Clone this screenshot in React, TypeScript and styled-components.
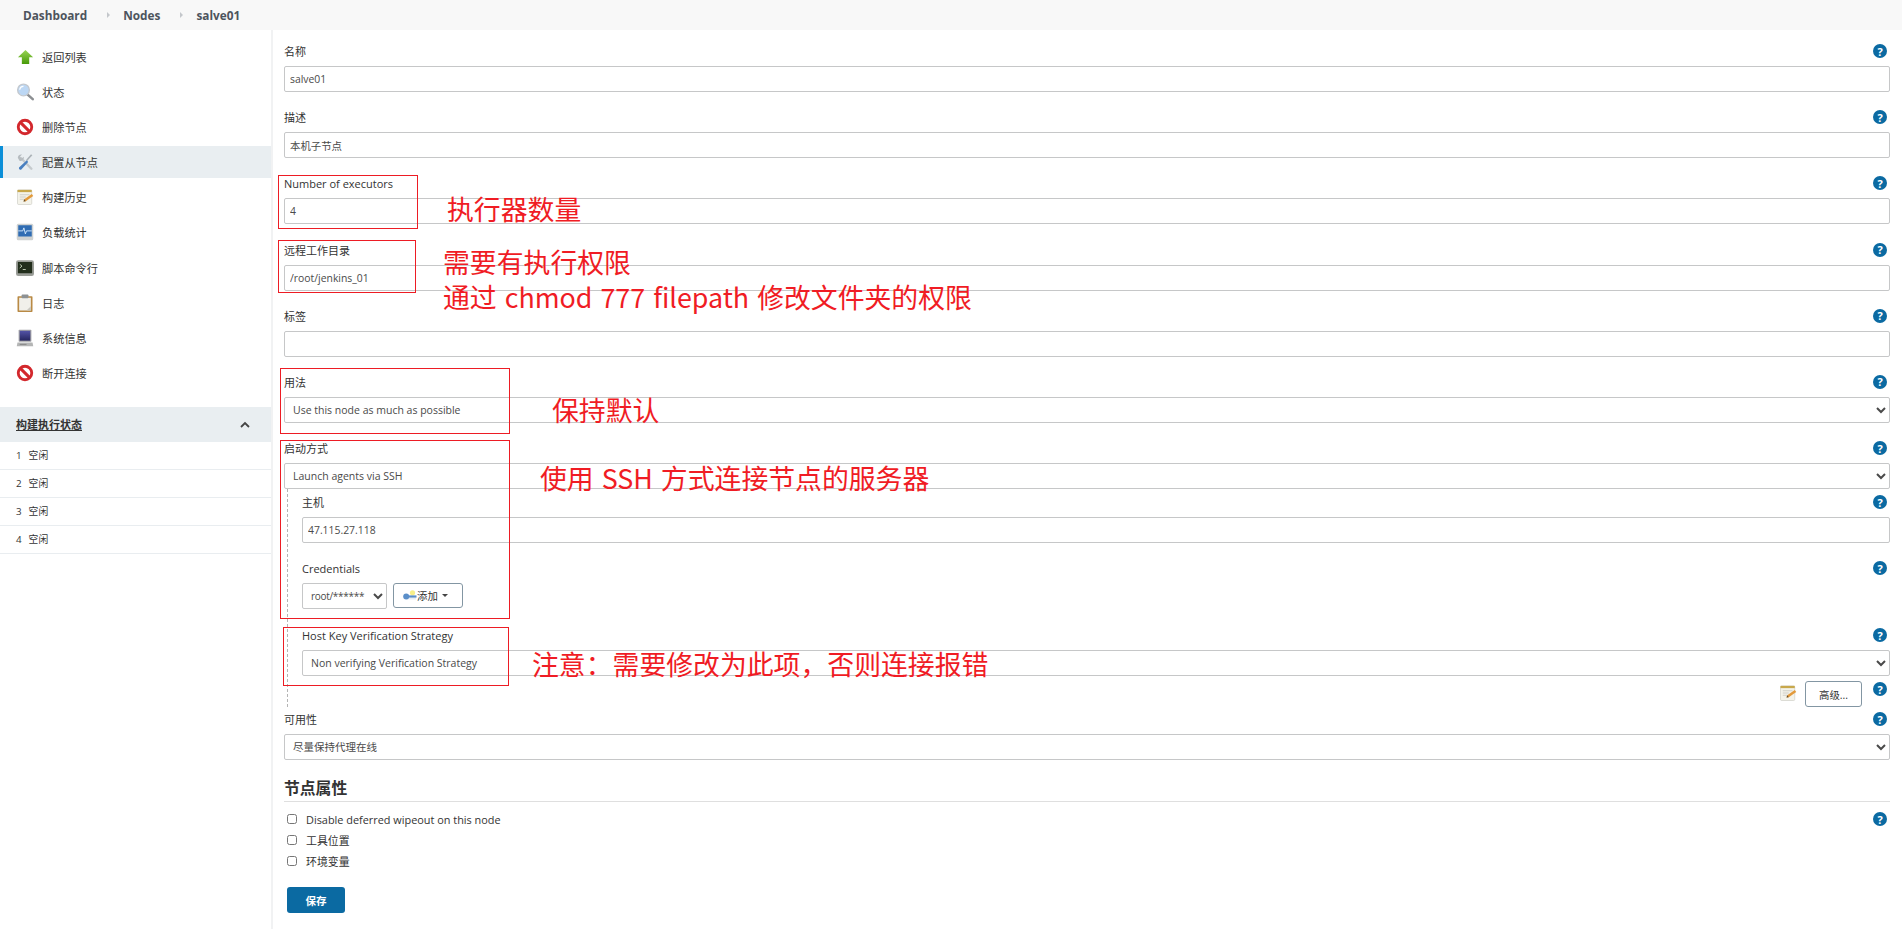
import { FC, ReactNode } from 'react'
import styled, { createGlobalStyle } from 'styled-components'

const FONT = `"Open Sans", "Noto Sans CJK SC", sans-serif`

const GlobalStyle = createGlobalStyle`
  html, body {
    margin: 0;
    padding: 0;
    height: 100%;
    overflow: hidden;
    background: #fff;
    color: #333;
    font-family: ${FONT};
    font-size: 11px;
  }
`

const Page = styled.div`
  position: relative;
  display: flex;
  flex-direction: column;
  height: 929px;
`

const Breadcrumbs = styled.nav`
  display: flex;
  align-items: center;
  flex: 0 0 30px;
  padding-left: 23px;
  background: #f8f8f8;
  font-size: 11.8px;
  font-weight: 700;
  color: #4d545d;
`

const Crumb = styled.span`
  white-space: nowrap;
`

const CrumbSep = styled.i`
  display: block;
  width: 0;
  height: 0;
  margin: 0 13px 0 20px;
  border-left: 3px solid #c4c7cb;
  border-top: 3px solid transparent;
  border-bottom: 3px solid transparent;
`

const Body = styled.div`
  display: flex;
  flex: 1;
  min-height: 0;
`

const Sidebar = styled.aside`
  flex: 0 0 271px;
  padding-top: 11px;
  border-right: 2px solid #f1f2f3;
`

const TaskList = styled.ul`
  display: flex;
  flex-direction: column;
  gap: 3.1px;
  margin: 0 0 18px;
  padding: 0;
  list-style: none;
`

const Task = styled.li<{ $active?: boolean }>`
  display: flex;
  align-items: center;
  gap: 8px;
  height: 32px;
  padding-left: 16px;
  box-sizing: border-box;
  font-size: 11.2px;
  color: #333;
  background: ${p => (p.$active ? '#e9eef1' : 'transparent')};
  box-shadow: ${p => (p.$active ? 'inset 3px 0 0 #0b8fd8' : 'none')};
`

const TaskIcon = styled.svg`
  flex: 0 0 18px;
  width: 18px;
  height: 18px;
`

const ExecutorHead = styled.div`
  display: flex;
  align-items: center;
  justify-content: space-between;
  height: 35px;
  padding: 0 21px 0 16px;
  background: #e9eef1;
`

const ExecutorTitle = styled.span`
  font-size: 11px;
  font-weight: 700;
  text-decoration: underline;
  color: #333;
`

const ExecutorRow = styled.div`
  display: flex;
  align-items: center;
  gap: 7px;
  height: 28px;
  box-sizing: border-box;
  padding-left: 16px;
  border-bottom: 1px solid #e9edf0;
  font-size: 9.8px;
  color: #333;
`

const Main = styled.main`
  flex: 1;
  min-width: 0;
  padding: 11px 12px 0 11px;
`

const Field = styled.div<{ $gap?: number }>`
  margin-bottom: ${p => p.$gap ?? 15.2}px;
`

const LabelRow = styled.div`
  display: flex;
  align-items: center;
  justify-content: space-between;
  height: 20px;
  margin-bottom: 5px;
  padding-right: 3px;
`

const Label = styled.label`
  font-size: 11px;
  color: #333;
`

const HelpBadge = styled.span`
  display: flex;
  align-items: center;
  justify-content: center;
  width: 14px;
  height: 14px;
  border-radius: 50%;
  background: #0b6aa2;
  color: #fff;
  font-size: 11px;
  font-weight: 700;
  line-height: 1;
`

const TextInput = styled.input`
  display: block;
  width: 100%;
  height: 26px;
  box-sizing: border-box;
  padding: 0 5px;
  border: 1px solid #c6c7c8;
  border-radius: 2px;
  background: #fff;
  font: 10.4px ${FONT};
  color: #4a4a4a;
  outline: none;
`

const Select = styled.select<{ $narrow?: boolean }>`
  display: block;
  width: ${p => (p.$narrow ? '85px' : '100%')};
  height: 26px;
  box-sizing: border-box;
  padding: 0 ${p => (p.$narrow ? 0 : 4)}px 0 4px;
  border: 1px solid #c6c7c8;
  border-radius: 2px;
  background: #fff;
  font: ${p => (p.$narrow ? 10 : 10.5)}px ${FONT};
  letter-spacing: ${p => (p.$narrow ? '-0.3px' : 'normal')};
  color: #4a4a4a;
  outline: none;
`

const Nested = styled.div`
  margin: 0 0 2px 3px;
  padding: 3px 0 0 14px;
  border-left: 1px dashed #b4b4b4;
`

const CredentialRow = styled.div`
  display: flex;
  align-items: flex-start;
  gap: 6px;
`

const OutlineButton = styled.button`
  display: inline-flex;
  align-items: center;
  box-sizing: border-box;
  padding: 0;
  border: 1px solid #8396a3;
  border-radius: 3px;
  background: #fff;
  font: 10.4px ${FONT};
  color: #333;
`

const AddButton = styled(OutlineButton)`
  width: 70px;
  height: 25px;
  padding-left: 9px;
`

const AdvancedButton = styled(OutlineButton)`
  justify-content: center;
  width: 57px;
  height: 26px;
`

const Caret = styled.i`
  display: block;
  width: 0;
  height: 0;
  margin-left: 4px;
  border-top: 3px solid #444;
  border-left: 3px solid transparent;
  border-right: 3px solid transparent;
`

const AdvancedRow = styled.div`
  display: flex;
  align-items: flex-start;
  justify-content: flex-end;
  height: 26px;
  padding-right: 3px;
`

const AdvancedIcon = styled.svg`
  width: 18px;
  height: 18px;
  margin: 3px 8px 0 0;
`

const AdvancedHelp = styled.div`
  margin: 1px 0 0 11px;
`

const SectionTitle = styled.h3`
  height: 24px;
  margin: 17px 0 6.5px;
  border-bottom: 1px solid #dfdfdf;
  font-size: 15.8px;
  font-weight: 700;
  line-height: 22px;
  color: #333;
`

const CheckRow = styled.div`
  display: flex;
  align-items: center;
  gap: 9px;
  height: 21px;
  padding: 0 3px;
  font-size: 10.9px;
  color: #333;
`

const CheckBox = styled.input`
  width: 10px;
  height: 10px;
  margin: 0;
  flex: none;
`

const CheckLabel = styled.span`
  flex: 1;
`

const SaveButton = styled.button`
  display: block;
  width: 58px;
  height: 26px;
  margin: 15.5px 0 0 3px;
  border: 0;
  border-radius: 3px;
  background: #0b6aa2;
  color: #fff;
  font: 700 10.5px ${FONT};
`

// hand-drawn notes laid over the screenshot
const NoteBox = styled.div<{ $x: number; $y: number; $w: number; $h: number }>`
  position: absolute;
  left: ${p => p.$x}px;
  top: ${p => p.$y}px;
  width: ${p => p.$w}px;
  height: ${p => p.$h}px;
  box-sizing: border-box;
  border: 1px solid #ed1c24;
  pointer-events: none;
`

const NoteText = styled.div<{ $x: number; $y: number }>`
  position: absolute;
  left: ${p => p.$x}px;
  top: ${p => p.$y}px;
  font-family: "Noto Sans CJK SC", sans-serif;
  font-size: 26.85px;
  line-height: 1;
  word-spacing: 2px;
  white-space: nowrap;
  color: #f01c24;
  pointer-events: none;
`

const ArrowUpIcon = () => (
  <TaskIcon viewBox="0 0 24 24">
    <defs>
      <linearGradient id="gUp" x1="0" y1="0" x2="0" y2="1">
        <stop offset="0" stopColor="#9ad455" />
        <stop offset="1" stopColor="#479a08" />
      </linearGradient>
    </defs>
    <path d="M12.6 2.6 22.8 12.2h-5.2v9.2H7.8v-9.2H2.6z" fill="url(#gUp)" />
  </TaskIcon>
)

const SearchIcon = () => (
  <TaskIcon viewBox="0 0 24 24">
    <path d="M15.5 15.5l6.8 6" stroke="#8c8f92" strokeWidth="3.4" strokeLinecap="round" />
    <circle cx="10" cy="9.3" r="7.8" fill="#bcd7f4" stroke="#c3c8ce" strokeWidth="1.8" />
    <path d="M5 9a5 5 0 0 1 5-4.6" fill="none" stroke="#fff" strokeWidth="1.6" />
  </TaskIcon>
)

const StopIcon = () => (
  <TaskIcon viewBox="0 0 24 24">
    <circle cx="12" cy="12" r="9" fill="#fff" stroke="#d3282d" strokeWidth="3.8" />
    <path d="M5.8 5.8l12.4 12.4" stroke="#d3282d" strokeWidth="4" />
  </TaskIcon>
)

const ToolsIcon = () => (
  <TaskIcon viewBox="0 0 24 24">
    <path d="M7 7l13.5 14" stroke="#c5cacd" strokeWidth="3.2" strokeLinecap="round" />
    <path d="M2.4 6.2A5 5 0 0 1 8 2l-2.6 2.8 2.2 2.4L10.6 5a5 5 0 0 1-6 5.4z" fill="#b6bcc0" />
    <path d="M21.8 3 20 1.8l-6.6 7.6 1.4 1.4z" fill="#aab1b6" />
    <path d="M14.5 9.8 4 19.4a2.3 2.3 0 0 0 2.8 2.9L16.2 12z" fill="#4a80c0" />
  </TaskIcon>
)

const NotepadShapes = () => (
  <>
    <rect x="2" y="2.5" width="19" height="19.5" rx="1.5" fill="#f4f3ea" stroke="#c8c8c0" strokeWidth=".8" />
    <rect x="2" y="2.5" width="19" height="3" fill="#c8a84b" />
    <path d="M5 9h13M5 12h8M5 15h6" stroke="#c4c4bc" strokeWidth="1" />
    <path d="M10 18l1-3L21 8l2 2.5L13 17.5z" fill="#e39a3b" />
    <path d="M10 18l1-3 2 2.5z" fill="#5a4a30" />
  </>
)

const NotepadIcon = () => (
  <TaskIcon viewBox="0 0 24 24">
    <NotepadShapes />
  </TaskIcon>
)

const MonitorIcon = () => (
  <TaskIcon viewBox="0 0 24 24">
    <rect x="1" y="1" width="22" height="22" rx="2" fill="#cfd2d2" />
    <rect x="3" y="3" width="18" height="15" fill="#2f6cb3" />
    <path d="M3 10.5h6l1.5-4 2 8 1.5-4h7" fill="none" stroke="#d7ecff" strokeWidth="1.2" />
  </TaskIcon>
)

const TerminalIcon = () => (
  <TaskIcon viewBox="0 0 24 24">
    <rect x="0" y="1.5" width="24" height="21" rx="3" fill="#9a9d97" />
    <rect x="2.5" y="4" width="19" height="15" fill="#222e1c" />
    <path d="M5 7l3 2.5L5 12M9 14h4" fill="none" stroke="#d6e3c9" strokeWidth="1.1" />
  </TaskIcon>
)

const ClipboardIcon = () => (
  <TaskIcon viewBox="0 0 24 24">
    <rect x="2" y="3" width="20" height="21" rx="1" fill="#b98a45" />
    <rect x="4.2" y="5" width="15.6" height="17" fill="#f1f0ea" />
    <path d="M14 22l5.8-5.8V22z" fill="#c9c8c0" />
    <rect x="7.5" y="0.8" width="9" height="5" rx="1" fill="#8d9194" />
  </TaskIcon>
)

const ComputerIcon = () => (
  <TaskIcon viewBox="0 0 24 24">
    <defs>
      <linearGradient id="gScreen" x1="0" y1="0" x2="0" y2="1">
        <stop offset="0" stopColor="#5353a6" />
        <stop offset="1" stopColor="#26265f" />
      </linearGradient>
    </defs>
    <rect x="3.5" y="1" width="17" height="16" rx="1" fill="#a0a0a4" />
    <rect x="5" y="2.5" width="14" height="13" fill="url(#gScreen)" />
    <path d="M2 18h20l1 5H1z" fill="#b4b5b5" />
    <path d="M5 20.5h9" stroke="#777" strokeWidth="1" />
  </TaskIcon>
)

const KeyIcon = () => (
  <svg width="14" height="12" viewBox="0 0 14 12">
    <circle cx="9.5" cy="2.8" r="2.6" fill="#f7ef8a" />
    <rect x="4" y="7.5" width="9" height="2" fill="#e7edf5" />
    <circle cx="3.2" cy="6.5" r="3" fill="#5b8fc9" />
    <rect x="3" y="5.4" width="10.5" height="2.2" fill="#5b8fc9" />
  </svg>
)

const ChevronUp = () => (
  <svg width="10" height="7" viewBox="0 0 10 7">
    <path d="M1 6l4-4 4 4" fill="none" stroke="#444" strokeWidth="1.8" />
  </svg>
)

const Help = () => <HelpBadge>?</HelpBadge>

const LabelLine: FC<{ children: ReactNode }> = ({ children }) => (
  <LabelRow>
    <Label>{children}</Label>
    <Help />
  </LabelRow>
)

const tasks: { label: string; icon: ReactNode; active?: boolean }[] = [
  { label: '返回列表', icon: <ArrowUpIcon /> },
  { label: '状态', icon: <SearchIcon /> },
  { label: '删除节点', icon: <StopIcon /> },
  { label: '配置从节点', icon: <ToolsIcon />, active: true },
  { label: '构建历史', icon: <NotepadIcon /> },
  { label: '负载统计', icon: <MonitorIcon /> },
  { label: '脚本命令行', icon: <TerminalIcon /> },
  { label: '日志', icon: <ClipboardIcon /> },
  { label: '系统信息', icon: <ComputerIcon /> },
  { label: '断开连接', icon: <StopIcon /> },
]

const App: FC = () => {
  return (
    <Page>
      <GlobalStyle />
      <Breadcrumbs>
        <Crumb>Dashboard</Crumb>
        <CrumbSep />
        <Crumb>Nodes</Crumb>
        <CrumbSep />
        <Crumb>salve01</Crumb>
      </Breadcrumbs>
      <Body>
        <Sidebar>
          <TaskList>
            {tasks.map(t => (
              <Task key={t.label} $active={t.active}>
                {t.icon}
                {t.label}
              </Task>
            ))}
          </TaskList>
          <ExecutorHead>
            <ExecutorTitle>构建执行状态</ExecutorTitle>
            <ChevronUp />
          </ExecutorHead>
          {[1, 2, 3, 4].map(n => (
            <ExecutorRow key={n}>
              <span>{n}</span>
              <span>空闲</span>
            </ExecutorRow>
          ))}
        </Sidebar>
        <Main>
          <Field>
            <LabelLine>名称</LabelLine>
            <TextInput defaultValue="salve01" />
          </Field>
          <Field>
            <LabelLine>描述</LabelLine>
            <TextInput defaultValue="本机子节点" />
          </Field>
          <Field>
            <LabelLine>Number of executors</LabelLine>
            <TextInput defaultValue="4" />
          </Field>
          <Field>
            <LabelLine>远程工作目录</LabelLine>
            <TextInput defaultValue="/root/jenkins_01" />
          </Field>
          <Field>
            <LabelLine>标签</LabelLine>
            <TextInput />
          </Field>
          <Field>
            <LabelLine>用法</LabelLine>
            <Select>
              <option>Use this node as much as possible</option>
            </Select>
          </Field>
          <Field $gap={0}>
            <LabelLine>启动方式</LabelLine>
            <Select>
              <option>Launch agents via SSH</option>
            </Select>
          </Field>
          <Nested>
            <Field $gap={15}>
              <LabelLine>主机</LabelLine>
              <TextInput defaultValue="47.115.27.118" />
            </Field>
            <Field $gap={16}>
              <LabelLine>Credentials</LabelLine>
              <CredentialRow>
                <Select $narrow>
                  <option>root/******</option>
                </Select>
                <AddButton type="button">
                  <KeyIcon />
                  添加
                  <Caret />
                </AddButton>
              </CredentialRow>
            </Field>
            <Field $gap={5}>
              <LabelLine>Host Key Verification Strategy</LabelLine>
              <Select>
                <option>Non verifying Verification Strategy</option>
              </Select>
            </Field>
            <AdvancedRow>
              <AdvancedIcon viewBox="0 0 24 24">
                <NotepadShapes />
              </AdvancedIcon>
              <AdvancedButton type="button">高级...</AdvancedButton>
              <AdvancedHelp>
                <Help />
              </AdvancedHelp>
            </AdvancedRow>
          </Nested>
          <Field $gap={0}>
            <LabelLine>可用性</LabelLine>
            <Select>
              <option>尽量保持代理在线</option>
            </Select>
          </Field>
          <SectionTitle>节点属性</SectionTitle>
          <CheckRow>
            <CheckBox type="checkbox" />
            <CheckLabel>Disable deferred wipeout on this node</CheckLabel>
            <Help />
          </CheckRow>
          <CheckRow>
            <CheckBox type="checkbox" />
            <CheckLabel>工具位置</CheckLabel>
          </CheckRow>
          <CheckRow>
            <CheckBox type="checkbox" />
            <CheckLabel>环境变量</CheckLabel>
          </CheckRow>
          <SaveButton type="button">保存</SaveButton>
        </Main>
      </Body>

      <NoteBox $x={278} $y={175} $w={140} $h={54} />
      <NoteBox $x={278} $y={240} $w={138} $h={53} />
      <NoteBox $x={280} $y={368} $w={230} $h={66} />
      <NoteBox $x={280} $y={440} $w={230} $h={179} />
      <NoteBox $x={283} $y={627} $w={226} $h={59} />
      <NoteText $x={447} $y={196}>执行器数量</NoteText>
      <NoteText $x={443} $y={249}>需要有执行权限</NoteText>
      <NoteText $x={443} $y={284}>通过 chmod 777 filepath 修改文件夹的权限</NoteText>
      <NoteText $x={552} $y={397}>保持默认</NoteText>
      <NoteText $x={540} $y={465}>使用 SSH 方式连接节点的服务器</NoteText>
      <NoteText $x={532} $y={651}>注意：需要修改为此项，否则连接报错</NoteText>
    </Page>
  )
}

export default App
